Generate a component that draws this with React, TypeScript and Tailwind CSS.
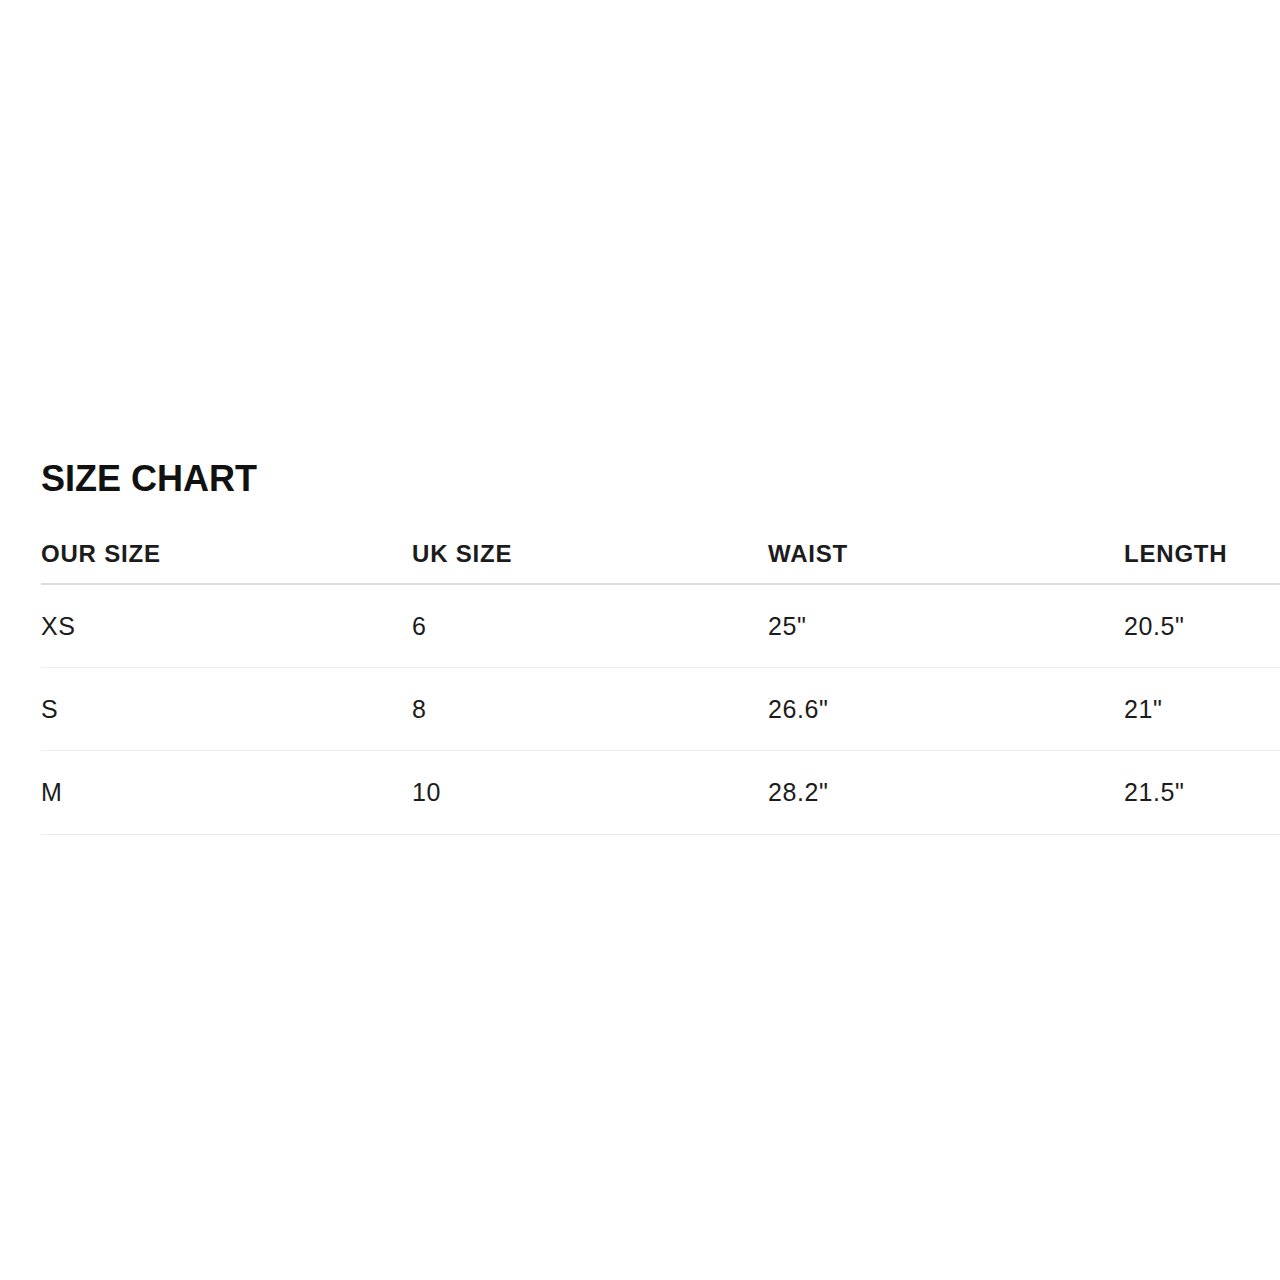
const rows = [
  { our: "XS", uk: "6", waist: '25"', length: '20.5"' },
  { our: "S", uk: "8", waist: '26.6"', length: '21"' },
  { our: "M", uk: "10", waist: '28.2"', length: '21.5"' },
];

const cols = "grid grid-cols-[371px_356px_356px_1fr]";

export default function App() {
  return (
    <div className="min-h-[1280px] w-[1280px] bg-white pt-[457px] pl-[41px] font-['Liberation_Sans',Arial,sans-serif] text-[#1c1c1c]">
      <h1 className="text-[36px] font-bold leading-[44px] text-[#111]">SIZE CHART</h1>
      <div className="mt-[21px]">
        <div className={`${cols} h-[63px] items-center border-b-2 border-[#dcdcdc] pt-[2px] text-[24px] font-semibold tracking-[0.8px]`}>
          <div>OUR SIZE</div>
          <div>UK SIZE</div>
          <div>WAIST</div>
          <div>LENGTH</div>
        </div>
        {rows.map((r, i) => (
          <div
            key={r.our}
            className={`${cols} ${i === 2 ? "h-[84px]" : "h-[83px]"} items-center border-b border-[#ececec] pt-[1px] text-[25px] tracking-[0.6px]`}
          >
            <div>{r.our}</div>
            <div>{r.uk}</div>
            <div>{r.waist}</div>
            <div>{r.length}</div>
          </div>
        ))}
      </div>
    </div>
  );
}
